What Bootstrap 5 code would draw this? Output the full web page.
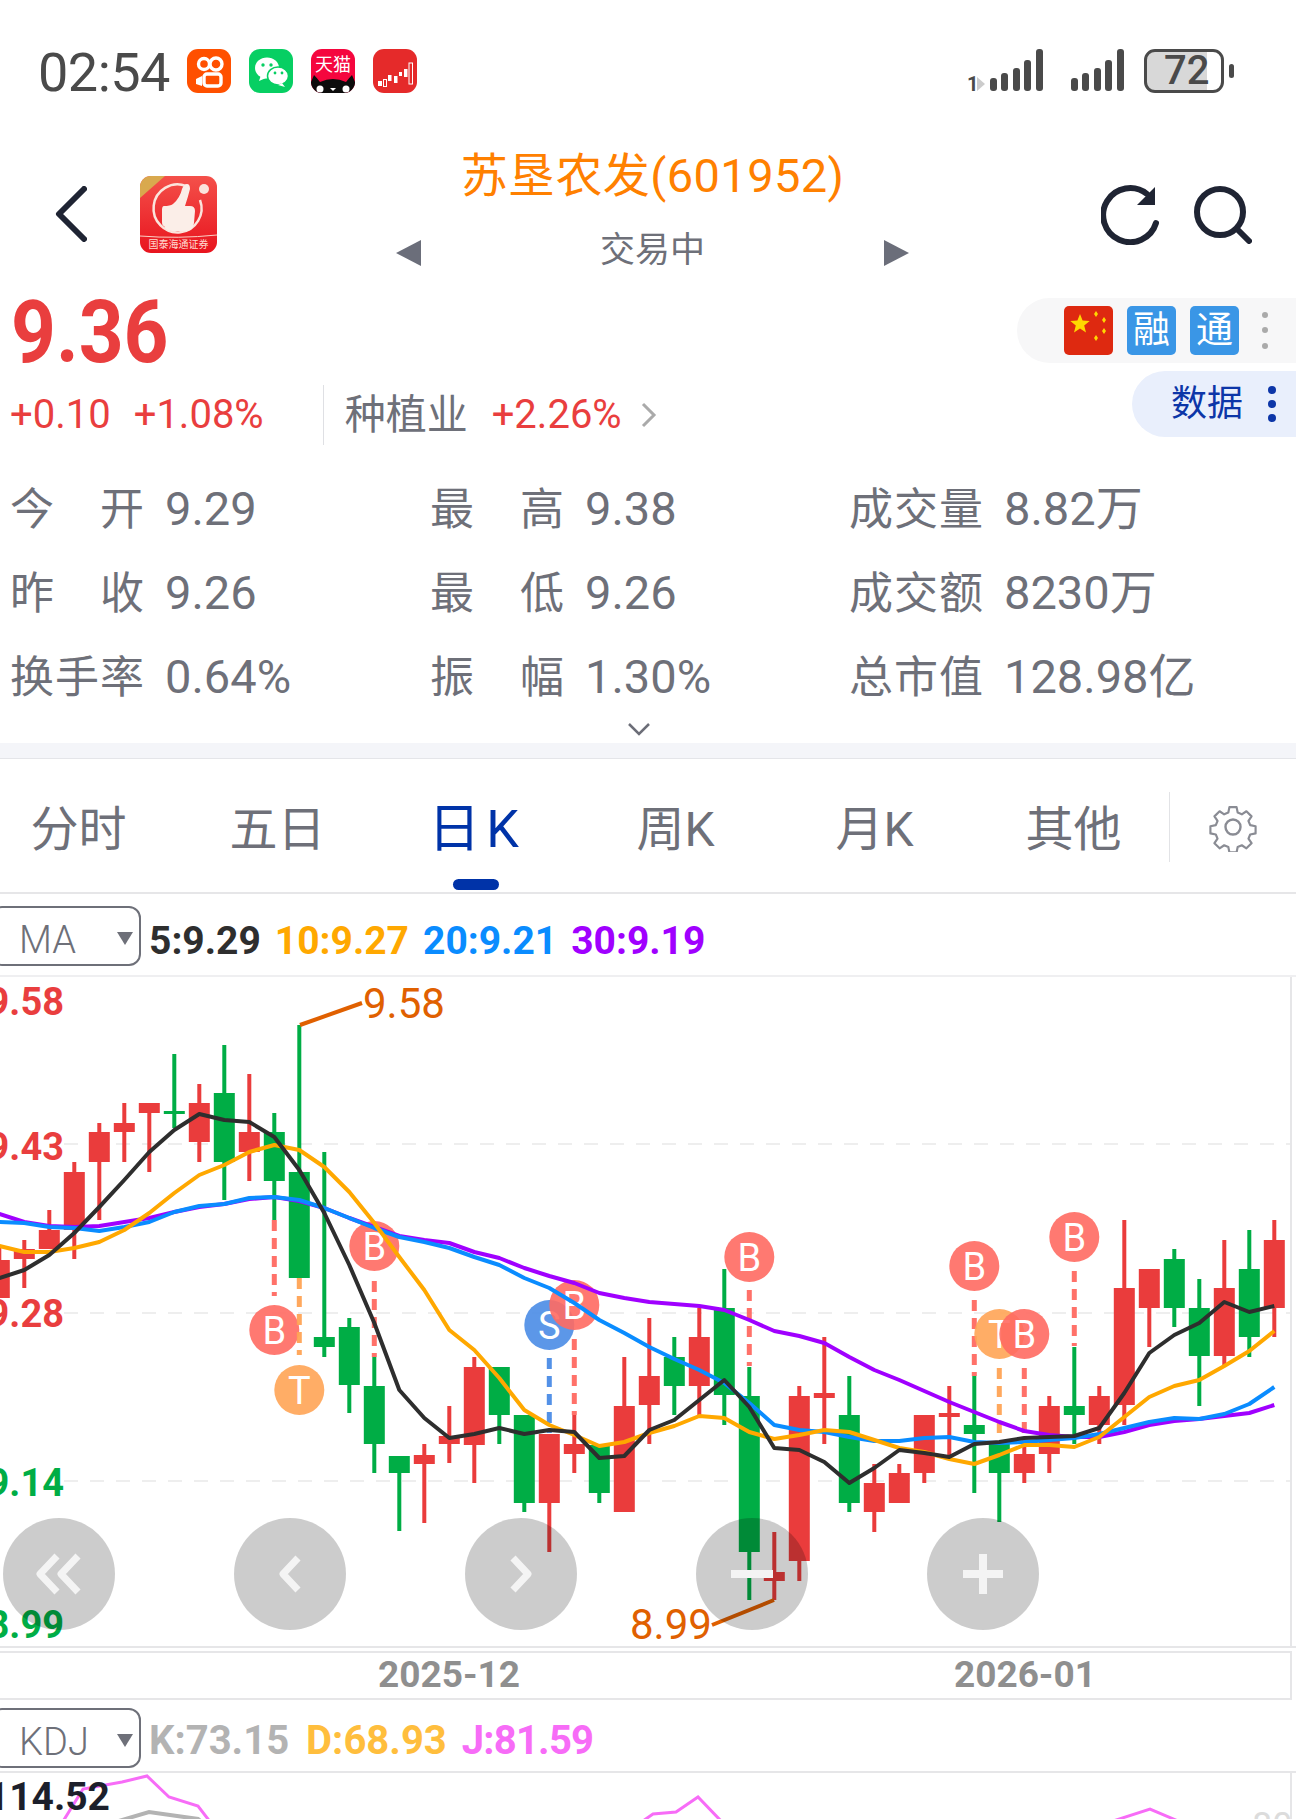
<!DOCTYPE html>
<html lang="zh">
<head>
<meta charset="utf-8">
<title>苏垦农发</title>
<link href="https://cdn.jsdelivr.net/npm/bootstrap@5.3.0/dist/css/bootstrap.min.css" rel="stylesheet">
<style>
html,body{margin:0;background:#fff;}
body{width:1296px;height:1819px;overflow:hidden;font-family:Roboto,"Noto Sans CJK SC",sans-serif;color:#6e7079;}
svg{display:block;flex:none;}
.sbar{height:142px;padding-left:38px;}
.clock{font-size:54px;line-height:1;color:#4a4a4a;width:149px;letter-spacing:-.5px;margin-top:3px;}
.appico{width:44px;height:44px;border-radius:11px;margin-right:18px;overflow:hidden;}
.sig-wrap{margin-left:auto;margin-right:62px;gap:27px;}
.batt{width:80px;height:44px;border:3px solid #4a4a4a;border-radius:11px;font-size:40px;line-height:38px;color:#4a4a4a;font-weight:500;padding-left:17px;background:linear-gradient(90deg,#d8d8d8 0,#d8d8d8 60px,#fff 60px);}
.batt-tip{width:5px;height:14px;background:#4a4a4a;border-radius:3px;margin-left:5px;}
.hd{height:148px;}
.hd-back{margin-left:55px;margin-top:-4px;}
.hd-logo{margin-left:53px;margin-top:-4px;}
.hd-mid{width:513px;margin-left:179px;}
.ttl{font-size:47px;line-height:60px;color:#ff8000;text-align:center;white-space:nowrap;margin-top:-10px;letter-spacing:.4px;}
.sub{height:50px;margin-top:21px;font-size:35px;color:#6e7079;}
.tri{margin-top:3px;}
.hd-r{margin-left:192px;gap:35px;margin-top:-3px;}
.quote{height:179px;}
.px{font-family:Roboto,sans-serif;font-weight:700;font-size:87px;line-height:65px;color:#e93e3e;margin-left:11px;margin-top:10px;transform:scaleX(.9);transform-origin:left center;}
.chg{font-size:40px;line-height:60px;color:#e93e3e;margin-top:20px;padding-left:10px;white-space:nowrap;}
.chg-sep{width:1px;height:60px;background:#dfe0e4;margin:0 21px 0 59px;}
.chg-lbl{font-size:41px;color:#6e7079;margin-right:24px;}
.chev{margin-left:19px;}
.tags{width:279px;height:65px;background:#f7f7f8;border-radius:33px 0 0 33px;margin-top:8px;margin-left:auto;padding-left:47px;gap:14px;}
.tg{width:49px;height:49px;border-radius:5px;background:#3a96e6;color:#fff;font-size:37px;line-height:49px;text-align:center;}
.dpill{width:164px;height:66px;background:#e9effc;border-radius:33px 0 0 33px;margin-top:8px;margin-left:auto;padding-left:39px;font-size:36px;color:#0d36a8;gap:25px;}
.stats{display:grid;grid-template-columns:420px 419px 1fr;padding-left:10px;grid-auto-rows:84px;margin-top:-2px;}
.stat{font-size:47px;line-height:84px;color:#6e7079;white-space:nowrap;}
.lab{display:inline-block;width:134px;font-size:44px;text-align-last:justify;margin-right:21px;}
.expand{height:24px;padding-left:628px;padding-top:3px;}
.band{height:16px;background:#f4f5f9;border-bottom:1px solid #e4e5e9;}
.tabs{height:135px;border-bottom:2px solid #e6e6e8;padding-top:47px;}
.tab{width:199px;text-align:center;font-size:48px;line-height:48px;color:#6e7079;}
.tab-on{color:#0033a8;position:relative;font-size:52px;letter-spacing:6px;}
.tab-on::after{content:"";position:absolute;left:76px;top:73px;width:46px;height:11px;border-radius:6px;background:#0033a8;}
.tabs-in{margin-left:-21px;}
.tab-sep{width:1px;height:70px;background:#e2e3e6;margin-left:-4px;margin-top:-14px;}
.gear{margin-left:38px;margin-top:-4px;}
.ind{height:83px;border-bottom:2px solid #efeff1;white-space:nowrap;padding-top:3px;}
.sel{width:151px;height:60px;margin-left:-10px;border:2px solid #6e7079;border-radius:12px;font-size:38px;line-height:64px;color:#6e7079;padding-left:27px;position:relative;font-weight:300;}
.sel::after{content:"";position:absolute;left:125px;top:24px;border-left:8px solid transparent;border-right:8px solid transparent;border-top:13px solid #6e7079;}
.vals{font-size:39px;font-weight:700;margin-left:8px;gap:14px;margin-top:10px;}
.chartbox{position:relative;height:671px;width:1296px;}
.chartbox text{font-family:Roboto,sans-serif;}
.overl{position:absolute;left:3px;top:541px;gap:119px;}
.navb{width:112px;height:112px;background:rgba(0,0,0,.2);border:0;padding:0;border-radius:50%;}
.xaxis{height:49px;margin-top:3px;border-top:2px solid #e6e6e8;border-bottom:2px solid #e6e6e8;border-right:2px solid #e6e6e8;width:1292px;font-size:37px;font-weight:700;line-height:44px;color:#8f8f8f;padding-left:378px;}
.xaxis span+span{margin-left:434px;}
.kdj-row{height:71px;white-space:nowrap;padding-top:4px;}
.kv{font-size:40px;font-weight:700;margin-left:8px;gap:17px;margin-top:7px;}
.kj{letter-spacing:-.8px;margin-left:-2px;}
.kwrap{height:51px;border-top:2px solid #e6e6e8;width:1296px;}
.kwrap text{font-family:Roboto,sans-serif;}
</style>
</head>
<body>

<div class="sbar d-flex align-items-center">
  <div class="clock">02:54</div>
  <div class="appico" style="background:#ff5000;">
    <svg width="44" height="44" viewBox="0 0 44 44"><g fill="none" stroke="#fff" stroke-width="3.4"><circle cx="17" cy="15" r="5.5"/><circle cx="29" cy="15" r="6"/><rect x="17" y="25" width="17" height="12" rx="3"/></g><path d="M15 27l-6 3v5l6 2z" fill="#fff"/></svg>
  </div>
  <div class="appico" style="background:#07cf63;">
    <svg width="44" height="44" viewBox="0 0 44 44"><ellipse cx="18" cy="19" rx="12" ry="10.5" fill="#fff"/><path d="M12 26l-2 6 7-3z" fill="#fff"/><ellipse cx="29" cy="27" rx="10.5" ry="9" fill="#fff" stroke="#07cf63" stroke-width="1.5"/><path d="M33 34l3 4-7-2z" fill="#fff"/><circle cx="14" cy="16" r="1.7" fill="#07cf63"/><circle cx="22" cy="16" r="1.7" fill="#07cf63"/><circle cx="26" cy="24" r="1.4" fill="#07cf63"/><circle cx="33" cy="24" r="1.4" fill="#07cf63"/></svg>
  </div>
  <div class="appico" style="background:#f5063e;">
    <svg width="44" height="44" viewBox="0 0 44 44"><text x="22" y="22" font-size="18" fill="#fff" text-anchor="middle" font-family="Noto Sans CJK SC">天猫</text><path d="M0 44V33L3 26Q6 29 9 33Q22 27 35 33Q38 29 41 26L44 33V44z" fill="#0c0c0c"/><circle cx="9" cy="40" r="3.5" fill="#fff"/><circle cx="35" cy="40" r="3.5" fill="#fff"/><path d="M19 39h6l-3 3z" fill="#fff"/></svg>
  </div>
  <div class="appico" style="background:#e52a2a;">
    <svg width="44" height="44" viewBox="0 0 44 44" fill="#fff"><rect x="5" y="32" width="4" height="5"/><rect x="10.5" y="30.5" width="3" height="7" fill="none" stroke="#fff"/><rect x="15" y="26" width="3.5" height="6"/><rect x="21" y="27" width="3.5" height="7"/><rect x="26" y="23" width="3" height="4"/><rect x="31" y="20" width="3.5" height="8"/><rect x="36" y="14" width="3.5" height="21" fill="none" stroke="#fff"/></svg>
  </div>
  <div class="sig-wrap d-flex align-items-center">
    <svg width="77" height="44" viewBox="0 0 77 44"><text x="0" y="42" font-size="20" font-weight="700" fill="#4a4a4a" font-family="Roboto">1</text><path d="M10 28v14l8-7z" fill="#ccc"/><g fill="#4a4a4a"><rect x="23" y="29" width="7" height="13" rx="3"/><rect x="34" y="24" width="7" height="18" rx="3"/><rect x="46" y="19" width="7" height="23" rx="3"/><rect x="57" y="11" width="7" height="31" rx="3"/><rect x="69" y="0" width="7" height="42" rx="3"/></g></svg>
    <svg width="53" height="44" viewBox="0 0 53 44" fill="#4a4a4a"><rect x="0" y="29" width="7" height="13" rx="3"/><rect x="11" y="24" width="7" height="18" rx="3"/><rect x="23" y="19" width="7" height="23" rx="3"/><rect x="34" y="11" width="7" height="31" rx="3"/><rect x="46" y="0" width="7" height="42" rx="3"/></svg>
    <div class="d-flex align-items-center" style="margin-left:-7px;">
      <div class="batt">72</div><div class="batt-tip"></div>
    </div>
  </div>
</div>

<div class="hd d-flex align-items-center">
  <svg class="hd-back" width="32" height="56" viewBox="0 0 32 56"><path d="M29 3L4 28l25 25" fill="none" stroke="#1f2433" stroke-width="6" stroke-linecap="round" stroke-linejoin="round"/></svg>
  <svg class="hd-logo" width="77" height="77" viewBox="0 0 77 77">
    <defs><clipPath id="lc"><rect width="77" height="77" rx="11"/></clipPath><linearGradient id="lg" x1="0" y1="0" x2="0" y2="1"><stop offset="0" stop-color="#f4504a"/><stop offset="1" stop-color="#e8141e"/></linearGradient></defs>
    <g clip-path="url(#lc)">
      <rect width="77" height="77" fill="url(#lg)"/>
      <path d="M0 0h25L0 22z" fill="#d9a94e"/>
      <path d="M46 10A24 24 0 1 0 60 24" fill="none" stroke="#fbe4dc" stroke-width="2.5"/>
      <path d="M24 30q-2 0-2 4v12q0 4 2 4 2 5 8 5h14q7 0 8-8l1-12q0-5-5-5h-5q3-9 5-17 0-5-3-5-3 0-5 5-2 9-9 15-3 2-9 2z" fill="#fbeee8"/>
      <circle cx="64" cy="13" r="5" fill="#fbe4dc"/>
      <path d="M0 60q38 3 77-1" fill="none" stroke="#fbd0c4" stroke-width="1"/>
      <text x="38.5" y="72" font-size="10" fill="#ffd9d0" text-anchor="middle" font-family="Noto Sans CJK SC">国泰海通证券</text>
    </g>
  </svg>
  <div class="hd-mid">
    <div class="ttl">苏垦农发(601952)</div>
    <div class="sub d-flex align-items-center justify-content-between">
      <svg class="tri" width="25" height="26" viewBox="0 0 25 26"><path d="M25 0v26L0 13z" fill="#6b6e7a"/></svg>
      <span>交易中</span>
      <svg class="tri" width="25" height="26" viewBox="0 0 25 26"><path d="M0 0v26l25-13z" fill="#6b6e7a"/></svg>
    </div>
  </div>
  <div class="hd-r d-flex align-items-center">
    <svg width="58" height="60" viewBox="0 0 58 60"><path d="M46 9A27 27 0 1 0 55 38" fill="none" stroke="#1f2433" stroke-width="6" stroke-linecap="round"/><path d="M54 2v18H36z" fill="#1f2433"/></svg>
    <svg width="58" height="58" viewBox="0 0 58 58"><circle cx="26" cy="26" r="23" fill="none" stroke="#1f2433" stroke-width="6"/><path d="M44 44l11 11" stroke="#1f2433" stroke-width="6" stroke-linecap="round"/></svg>
  </div>
</div>

<div class="quote d-flex">
  <div>
    <div class="px">9.36</div>
    <div class="chg d-flex align-items-center">
      <span>+0.10</span><span style="margin-left:23px;">+1.08%</span>
      <span class="chg-sep"></span>
      <span class="chg-lbl">种植业</span><span>+2.26%</span>
      <svg class="chev" width="16" height="26" viewBox="0 0 16 26"><path d="M2 2l11 11L2 24" fill="none" stroke="#aaa" stroke-width="3"/></svg>
    </div>
  </div>
  <div class="ms-auto">
    <div class="tags d-flex align-items-center">
      <svg width="49" height="49" viewBox="0 0 49 49"><rect width="49" height="49" rx="5" fill="#de2910"/><g fill="#ffd800"><path d="M16 8l2.6 6.6 7.1.4-5.5 4.5 1.8 6.9-6-3.8-6 3.8 1.8-6.9-5.5-4.5 7.1-.4z"/><path d="M32 5l2 3-2 3-2-3z"/><path d="M40 11l2 3-2 3-2-3z"/><path d="M40 22l2 3-2 3-2-3z"/><path d="M32 29l2 3-2 3-2-3z"/></g></svg>
      <span class="tg">融</span>
      <span class="tg">通</span>
      <svg class="ms-2" width="8" height="40" viewBox="0 0 8 40" fill="#aaa"><circle cx="4" cy="4" r="3"/><circle cx="4" cy="19" r="3"/><circle cx="4" cy="35" r="3"/></svg>
    </div>
    <div class="dpill d-flex align-items-center">
      <span>数据</span>
      <svg width="8" height="36" viewBox="0 0 8 36" fill="#0d36a8"><circle cx="4" cy="4" r="4"/><circle cx="4" cy="18" r="4"/><circle cx="4" cy="32" r="4"/></svg>
    </div>
  </div>
</div>

<div class="stats">
  <div class="stat"><span class="lab">今 开</span>9.29</div>
  <div class="stat"><span class="lab">最 高</span>9.38</div>
  <div class="stat"><span class="lab">成交量</span>8.82万</div>
  <div class="stat"><span class="lab">昨 收</span>9.26</div>
  <div class="stat"><span class="lab">最 低</span>9.26</div>
  <div class="stat"><span class="lab">成交额</span>8230万</div>
  <div class="stat"><span class="lab">换手率</span>0.64%</div>
  <div class="stat"><span class="lab">振 幅</span>1.30%</div>
  <div class="stat"><span class="lab">总市值</span>128.98亿</div>
</div>
<div class="expand"><svg width="22" height="14" viewBox="0 0 22 14"><path d="M1 2l10 10L21 2" fill="none" stroke="#6c6e78" stroke-width="2.5"/></svg></div>
<div class="band"></div>

<div class="tabs d-flex">
  <div class="tabs-in d-flex">
    <div class="tab">分时</div><div class="tab">五日</div><div class="tab tab-on">日K</div><div class="tab">周K</div><div class="tab">月K</div><div class="tab">其他</div>
  </div>
  <div class="tab-sep"></div>
  <svg class="gear" width="50" height="50" viewBox="0 0 50 50"><circle cx="25" cy="25" r="7.5" fill="none" stroke="#8a8c94" stroke-width="2.4"/><path d="M21 3h8l1.2 6 4.6 1.9 5.1-3.4 5.7 5.7-3.4 5.1 1.9 4.6 6 1.2v8l-6 1.2-1.9 4.6 3.4 5.1-5.7 5.7-5.1-3.4-4.6 1.9-1.2 6h-8l-1.2-6-4.6-1.9-5.1 3.4-5.7-5.7 3.4-5.1-1.9-4.6-6-1.2v-8l6-1.2 1.9-4.6-3.4-5.1 5.7-5.7 5.1 3.4 4.6-1.9z" transform="translate(25 25) scale(.9) translate(-25 -25)" fill="none" stroke="#8a8c94" stroke-width="2.4" stroke-linejoin="round"/></svg>
</div>

<div class="ind d-flex align-items-center">
  <div class="sel">MA</div>
  <div class="vals d-flex">
    <span style="color:#2e2e2e;">5:9.29</span><span style="color:#ffa800;">10:9.27</span><span style="color:#0a8cff;">20:9.21</span><span style="color:#a000ff;">30:9.19</span>
  </div>
</div>

<div class="chartbox">
  <svg id="ch" width="1296" height="671" viewBox="0 977 1296 671">
    <g id="grid"></g>
    <g id="cand"></g>
    <g id="mark"></g>
    <g id="lines"></g>
    <path d="M300 1025L362 1003" stroke="#e06000" stroke-width="4" fill="none"/>
    <path d="M774 1600L712 1625" stroke="#e06000" stroke-width="4" fill="none"/>
    <text x="363" y="1018" font-size="42" fill="#e06000">9.58</text>
    <text x="630" y="1639" font-size="42" fill="#e06000">8.99</text>
    <g font-size="38" font-weight="700" text-anchor="end">
      <text x="64" y="1015" fill="#e93e3e">9.58</text>
      <text x="64" y="1160" fill="#e93e3e">9.43</text>
      <text x="64" y="1327" fill="#e93e3e">9.28</text>
      <text x="64" y="1496" fill="#00ad45">9.14</text>
      <text x="64" y="1638" fill="#00ad45">8.99</text>
    </g>
    <path d="M1291 977V1648M0 1647H1296" stroke="#e6e6e8" stroke-width="2"/>
  </svg>
  <div class="overl d-flex">
    <button class="navb d-flex align-items-center justify-content-center" aria-label="first"><svg width="48" height="42" viewBox="0 0 48 42"><path d="M22 3L5 21l17 18M43 3L26 21l17 18" fill="none" stroke="#f4f4f4" stroke-width="7" stroke-linejoin="round"/></svg></button>
    <button class="navb d-flex align-items-center justify-content-center" aria-label="prev"><svg width="24" height="38" viewBox="0 0 24 38"><path d="M20 3L5 19l15 16" fill="none" stroke="#f4f4f4" stroke-width="7" stroke-linejoin="round"/></svg></button>
    <button class="navb d-flex align-items-center justify-content-center" aria-label="next"><svg width="24" height="38" viewBox="0 0 24 38"><path d="M4 3l15 16L4 35" fill="none" stroke="#f4f4f4" stroke-width="7" stroke-linejoin="round"/></svg></button>
    <button class="navb d-flex align-items-center justify-content-center" aria-label="minus"><svg width="42" height="8" viewBox="0 0 42 8"><rect width="42" height="8" fill="#f4f4f4"/></svg></button>
    <button class="navb d-flex align-items-center justify-content-center" aria-label="plus"><svg width="40" height="40" viewBox="0 0 40 40"><path d="M16 0h8v16h16v8H24v16h-8V24H0v-8h16z" fill="#f4f4f4"/></svg></button>
  </div>
</div>

<div class="xaxis"><span>2025-12</span><span>2026-01</span></div>

<div class="kdj-row d-flex align-items-center">
  <div class="sel">KDJ</div>
  <div class="kv d-flex">
    <span style="color:#b3b3b3;">K:73.15</span><span style="color:#ffbe3d;">D:68.93</span><span class="kj" style="color:#f76cf7;">J:81.59</span>
  </div>
</div>

<div class="kwrap">
<svg width="1296" height="50" viewBox="0 1769 1296 50">
  <g fill="none" stroke-width="3">
    <path d="M112 1819L149 1808 198 1815 203 1819" stroke="#b3b3b3" stroke-width="4"/>
    <path d="M196 1819h6" stroke="#ffbe3d" stroke-width="5"/>
    <path d="M62 1819L83 1785 122 1778 147 1772 169 1793 198 1802 211 1819" stroke="#f76cf7"/>
    <path d="M640 1819L653 1810 676 1808 698 1793 723 1819" stroke="#f76cf7"/>
    <path d="M1107 1819L1150 1805 1178 1817 1184 1819" stroke="#f76cf7"/>
  </g>
  <text x="110" y="1806" font-size="39" font-weight="700" fill="#1c1f2b" text-anchor="end">114.52</text>
  <text x="1252" y="1834" font-size="36" fill="#dcdcdc">80</text>
  <path d="M1291 1769V1819" stroke="#e6e6e8" stroke-width="2"/>
</svg>
</div>

<script src="https://cdn.jsdelivr.net/npm/bootstrap@5.3.0/dist/js/bootstrap.bundle.min.js"></script>
<script>
(function(){
var R='#ea3c3c',G='#00ad45';
// [high, bodyTop, bodyBottom, low, colour]; candles are 25px apart
var c=[[1245,1260,1298,1298,R],[1240,1249,1259,1288,R],[1210,1230,1249,1249,R],[1162,1172,1230,1259,R],[1123,1132,1162,1220,R],[1103,1123,1132,1162,R],[1103,1103,1113,1172,R],[1054,1111,1114,1128,G],[1084,1103,1142,1162,R],[1045,1093,1162,1200,G],[1074,1132,1152,1181,R],[1113,1132,1181,1220,G],[1025,1172,1278,1278,G],[1152,1337,1347,1357,G],[1318,1327,1385,1413,G],[1357,1386,1444,1473,G],[1456,1456,1473,1531,G],[1444,1455,1464,1523,R],[1406,1436,1444,1463,R],[1357,1367,1445,1483,R],[1367,1367,1415,1444,G],[1415,1415,1503,1512,G],[1434,1434,1503,1552,R],[1415,1444,1454,1473,R],[1445,1445,1493,1503,G],[1357,1406,1512,1512,R],[1318,1376,1405,1444,R],[1337,1357,1386,1415,G],[1308,1337,1386,1415,R],[1269,1308,1395,1425,G],[1367,1396,1552,1600,G],[1532,1572,1581,1600,R],[1386,1396,1561,1581,R],[1337,1393,1398,1444,R],[1376,1415,1503,1512,G],[1464,1483,1512,1532,R],[1464,1473,1503,1503,R],[1415,1415,1473,1483,R],[1386,1413,1417,1455,R],[1376,1425,1434,1493,G],[1444,1444,1473,1522,G],[1443,1454,1473,1483,R],[1396,1406,1454,1473,R],[1347,1406,1415,1444,G],[1386,1396,1425,1444,R],[1220,1288,1405,1425,R],[1269,1269,1308,1347,R],[1249,1259,1308,1327,G],[1279,1308,1356,1406,G],[1240,1288,1356,1367,R],[1230,1269,1337,1357,G],[1220,1240,1308,1337,R]];
var X=function(i){return -0.7+25*i};
var s='';
[1144,1313,1481].forEach(function(y){s+='<path d="M64 '+y+'H1291" stroke="#eeeeee" stroke-width="2" stroke-dasharray="14 12"/>'});
document.getElementById('grid').innerHTML=s;
s='';
c.forEach(function(d,i){var x=X(i);
 s+='<rect x="'+(x-2)+'" y="'+d[0]+'" width="4" height="'+(d[3]-d[0])+'" fill="'+d[4]+'"/>';
 s+='<rect x="'+(x-10.5)+'" y="'+d[1]+'" width="21" height="'+(d[2]-d[1])+'" fill="'+d[4]+'"/>';
});
document.getElementById('cand').innerHTML=s;
var RM='#ff6a62',TM='#ffa455',SM='#4a8ce6';
var m=[['B',274.3,1330,1220,1296,RM],['T',299.3,1390,1278,1355,TM],['B',374.3,1246,1281,1357,RM],['S',549.3,1325,1358,1433,SM],['B',574.3,1305,1339,1415,RM],['B',749.3,1257,1290,1366,RM],['B',974.3,1266,1300,1376,RM],['T',999.3,1334,1368,1433,TM],['B',1024.3,1334,1368,1443,RM],['B',1074.3,1237,1271,1346,RM]];
s='';
m.forEach(function(d){
 s+='<path d="M'+d[1]+' '+d[3]+'V'+d[4]+'" stroke="'+d[5]+'" stroke-width="5" stroke-dasharray="11 7" opacity=".95"/>';
 s+='<circle cx="'+d[1]+'" cy="'+d[2]+'" r="25" fill="'+d[5]+'" opacity=".9"/>';
 s+='<text x="'+d[1]+'" y="'+(d[2]+13.5)+'" font-size="38" fill="#fff" text-anchor="middle">'+d[0]+'</text>';
});
document.getElementById('mark').innerHTML=s;
var L={
 '#a000ff':[1214,1222,1226,1227,1226,1222,1218,1212,1207,1204,1199,1197,1201,1208,1218,1227,1236,1240,1243,1252,1258,1268,1276,1283,1293,1298,1302,1304,1306,1310,1320,1331,1336,1343,1357,1370,1380,1391,1402,1412,1422,1431,1435,1437,1437,1432,1425,1421,1419,1416,1413,1405],
 '#0a8cff':[1222,1223,1227,1228,1231,1227,1222,1212,1206,1204,1198,1197,1200,1208,1218,1228,1237,1242,1248,1257,1265,1278,1288,1303,1320,1333,1347,1359,1370,1383,1403,1425,1430,1432,1437,1441,1441,1438,1437,1442,1443,1442,1440,1438,1434,1428,1422,1418,1419,1414,1404,1387],
 '#ffa800':[1246,1252,1252,1248,1242,1230,1213,1193,1175,1165,1152,1145,1150,1167,1192,1223,1257,1290,1330,1350,1378,1410,1425,1435,1446,1442,1433,1426,1416,1418,1432,1439,1435,1430,1432,1440,1448,1452,1459,1464,1455,1445,1445,1447,1437,1417,1397,1386,1380,1366,1351,1331],
 '#2e2e2e':[1278,1270,1255,1233,1207,1180,1152,1130,1114,1120,1122,1137,1170,1213,1265,1323,1390,1418,1438,1434,1428,1434,1430,1432,1458,1456,1430,1420,1400,1380,1407,1448,1450,1462,1483,1468,1450,1453,1457,1444,1442,1438,1437,1436,1428,1393,1353,1335,1323,1302,1312,1306]
};
s='';
Object.keys(L).forEach(function(k){
 var p=L[k].map(function(y,i){return X(i)+','+y}).join(' ');
 s+='<polyline points="'+p+'" fill="none" stroke="'+k+'" stroke-width="4" stroke-linejoin="round"/>';
});
document.getElementById('lines').innerHTML=s;
})();
</script>
</body>
</html>
